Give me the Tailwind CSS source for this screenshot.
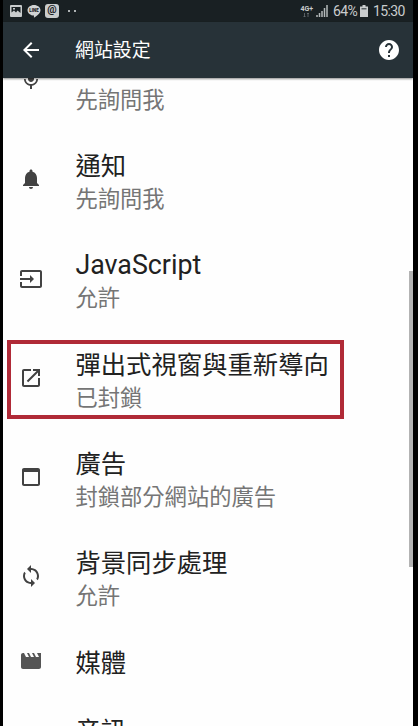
<!DOCTYPE html>
<html lang="zh-Hant">
<head>
<meta charset="utf-8">
<title>網站設定</title>
<script src="https://cdn.jsdelivr.net/npm/@tailwindcss/browser@4"></script>
</head>
<body class="bg-black">
<div class="relative flex h-[726px] w-[418px] flex-col overflow-hidden bg-black pl-[3px] pr-[5px] font-[Roboto,'Noto_Sans_CJK_TC',sans-serif]">
  <div class="flex h-[22px] shrink-0 items-center bg-[#192023] pl-[7px] pr-[8px] text-[#c9cccd]">
    <svg class="h-3 w-3" viewBox="0 0 12 12"><rect width="12" height="12" rx="1" fill="#c9cccd"/><path d="M1.5 2h9v6L7.5 5.5 6 7.5 4 5.5 1.500 7.500z" fill="#192023"/><rect x="3" y="3" width="2" height="1.500" fill="#c9cccd"/></svg>
    <svg class="ml-[5px] h-[13px] w-[14px]" viewBox="0 0 14 13"><path d="M7 0c3.600 0 6.500 2.300 6.500 5.200 0 2.300-1.900 4.300-6.100 7.300-.4.300-.6 0-.5-.5l.1-1.400C3.400 10.400.5 8.100.5 5.200S3.400 0 7 0z" fill="#d0d3d4"/><text x="7" y="6.900" text-anchor="middle" font-size="4.500" font-weight="900" font-family="Roboto" fill="#192023">LINE</text></svg>
    <div class="ml-[4px] flex h-[14px] w-[14px] items-center justify-center rounded-[3px] bg-[#c9cccd] pb-[2px] text-[10.500px] font-bold leading-none text-[#192023]">@</div>
    <div class="ml-[9px] flex gap-[4px]"><i class="h-[2px] w-[2px] bg-[#aeb3b5]"></i><i class="h-[2px] w-[2px] bg-[#aeb3b5]"></i></div>
    <div class="ml-auto flex items-center">
      <div class="flex flex-col items-center"><span class="text-[7px] font-bold leading-[7px]">4G+</span>
        <svg class="h-[4px] w-[7px]" viewBox="0 0 7 4"><path d="M1.500 4V0M.5 3l1 1 1-1M5 0v4M4 1l1-1 1 1" fill="none" stroke="#697073" stroke-width=".8"/></svg></div>
      <svg class="ml-[3px] h-[12px] w-[12px]" viewBox="0 0 12 12"><path d="M1 12v-2M3.500 12V8M6 12V6M8.500 12V3M11 12V0" stroke="#b4b9bb" stroke-width="1.500"/></svg>
      <span class="ml-[5px] w-[23px] whitespace-nowrap text-[14px] leading-[22px] tracking-[-0.6px]">64%</span>
      <svg class="ml-[4px] h-[12px] w-[8px]" viewBox="0 0 8 12"><path d="M2.500 0h3v1.500H8V12H0V1.500h2.500z" fill="#c9cccd"/><path d="M1.500 3h5v1.500h-5z" fill="#596063"/></svg>
      <span class="ml-[5px] w-[32px] whitespace-nowrap text-[14px] leading-[22px] tracking-[-0.6px]">15:30</span>
    </div>
  </div>
  <header class="z-10 flex h-[55.500px] shrink-0 items-center bg-[#273238] pl-[16px] pr-[12px] text-white shadow-[0_1px_2px_rgba(0,0,0,0.45)]">
    <svg class="h-6 w-6 fill-white" viewBox="0 0 24 24"><path d="M20 11H7.830l5.590-5.590L12 4l-8 8 8 8 1.410-1.410L7.830 13H20v-2z"/></svg>
    <h1 class="ml-[32px] pt-[2px] text-[18.900px] font-normal leading-[30px]">網站設定</h1>
    <svg class="ml-auto h-6 w-6 fill-white" viewBox="0 0 24 24"><path d="M12 2C6.480 2 2 6.480 2 12s4.480 10 10 10 10-4.480 10-10S17.520 2 12 2zm1 17h-2v-2h2v2zm2.070-7.750-.9.920C13.450 12.900 13 13.500 13 15h-2v-.5c0-1.100.450-2.100 1.170-2.830l1.240-1.260c.370-.360.590-.860.590-1.410 0-1.100-.9-2-2-2s-2 .9-2 2H8c0-2.210 1.790-4 4-4s4 1.790 4 4c0 .880-.360 1.680-.930 2.250z"/></svg>
  </header>
  <main class="min-h-0 flex-1 overflow-hidden bg-[#fefefe] text-[#212121]">
    <ul class="mt-[-44px]">
      <li class="flex h-[99.400px] pl-[16.400px] pt-[16px]">
        <svg class="mt-[18px] h-6 w-6 fill-[#424242]" viewBox="0 0 24 24"><path d="M12 14c1.660 0 3-1.340 3-3V5c0-1.660-1.340-3-3-3S9 3.340 9 5v6c0 1.660 1.340 3 3 3zm5.300-3c0 3-2.540 5.100-5.300 5.100S6.700 14 6.700 11H5c0 3.410 2.720 6.230 6 6.720V21h2v-3.280c3.280-.480 6-3.300 6-6.720h-1.700z"/></svg>
        <div class="ml-[32px] pt-[33px] text-[22.300px] leading-[34px] text-[#757575]">先詢問我</div>
      </li>
      <li class="flex h-[99.400px] pl-[16.400px] pt-[16px]">
        <svg class="mt-[18px] h-6 w-6 fill-[#424242]" viewBox="0 0 24 24"><path d="M12 22c1.100 0 2-.9 2-2h-4c0 1.100.890 2 2 2zm6-6v-5c0-3.070-1.640-5.640-4.500-6.320V4c0-.830-.670-1.500-1.500-1.500s-1.500.670-1.500 1.500v.680C7.630 5.360 6 7.920 6 11v5l-2 2v1h16v-1l-2-2z"/></svg>
        <div class="ml-[32px]"><div class="text-[25.350px] leading-[34px]">通知</div><div class="mt-[-1px] text-[22.300px] leading-[34px] text-[#757575]">先詢問我</div></div>
      </li>
      <li class="flex h-[99.400px] pl-[16.400px] pt-[16px]">
        <svg class="mt-[18.500px] h-6 w-6 fill-[#424242]" viewBox="0 0 24 24"><path d="M21 3.010H3c-1.100 0-2 .9-2 2V9h2V4.990h18v14.030H3V15H1v4.010c0 1.100.9 1.980 2 1.980h18c1.100 0 2-.880 2-1.980v-14c0-1.110-.9-2-2-2zM11 16l4-4-4-4v3H1v2h10v3z"/></svg>
        <div class="ml-[32px]"><div class="text-[26.800px] leading-[34px]">JavaScript</div><div class="mt-[-1px] text-[22.300px] leading-[34px] text-[#757575]">允許</div></div>
      </li>
      <li class="flex h-[99.400px] pl-[16.400px] pt-[16px]">
        <svg class="mt-[18px] h-6 w-6 fill-[#424242]" viewBox="0 0 24 24"><path d="M19 19H5V5h7V3H5c-1.110 0-2 .9-2 2v14c0 1.100.890 2 2 2h14c1.100 0 2-.9 2-2v-7h-2v7zM14 3v2h3.590l-9.830 9.830 1.410 1.410L19 6.410V10h2V3h-7z"/></svg>
        <div class="ml-[32px]"><div class="text-[25.350px] leading-[34px]">彈出式視窗與重新導向</div><div class="mt-[-1px] text-[22.300px] leading-[34px] text-[#757575]">已封鎖</div></div>
      </li>
      <li class="flex h-[99.400px] pl-[16.400px] pt-[16px]">
        <svg class="mt-[18px] h-6 w-6 fill-[#424242]" viewBox="0 0 24 24"><path d="M19 3H5c-1.110 0-2 .9-2 2v14c0 1.100.890 2 2 2h14c1.100 0 2-.9 2-2V5c0-1.100-.9-2-2-2zm0 16H5V7h14v12z"/></svg>
        <div class="ml-[32px]"><div class="text-[25.350px] leading-[34px]">廣告</div><div class="mt-[-1px] text-[22.300px] leading-[34px] text-[#757575]">封鎖部分網站的廣告</div></div>
      </li>
      <li class="flex h-[99.400px] pl-[16.400px] pt-[16px]">
        <svg class="mt-[18px] h-6 w-6 fill-[#424242]" viewBox="0 0 24 24"><path d="M12 4V1L8 5l4 4V6c3.310 0 6 2.690 6 6 0 1.010-.250 1.970-.7 2.800l1.460 1.460C19.540 15.030 20 13.570 20 12c0-4.420-3.580-8-8-8zm0 14c-3.310 0-6-2.690-6-6 0-1.010.250-1.970.7-2.800L5.240 7.740C4.460 8.970 4 10.430 4 12c0 4.420 3.580 8 8 8v3l4-4-4-4v3z"/></svg>
        <div class="ml-[32px]"><div class="text-[25.350px] leading-[34px]">背景同步處理</div><div class="mt-[-1px] text-[22.300px] leading-[34px] text-[#757575]">允許</div></div>
      </li>
      <li class="flex h-[68px] pl-[16.400px] pt-[16px]">
        <svg class="mt-[3px] h-6 w-6 fill-[#555]" viewBox="0 0 24 24"><path d="M18 4l2 4h-3l-2-4h-2l2 4h-3l-2-4H8l2 4H7L5 4H4c-1.100 0-1.990.9-1.990 2L2 18c0 1.100.9 2 2 2h16c1.100 0 2-.9 2-2V4h-4z"/></svg>
        <div class="ml-[32px] text-[25.350px] leading-[34px]">媒體</div>
      </li>
      <li class="flex h-[66px] pl-[72.400px] pt-[16px] text-[25.350px] leading-[34px]">音訊</li>
    </ul>
  </main>
  <div class="absolute left-[7px] top-[340px] h-[79px] w-[337px] border-4 border-[#b02a37]"></div>
  <div class="absolute left-[409px] top-[271px] h-[296px] w-[4px] bg-[#b3b3b3]"></div>
</div>
</body>
</html>
